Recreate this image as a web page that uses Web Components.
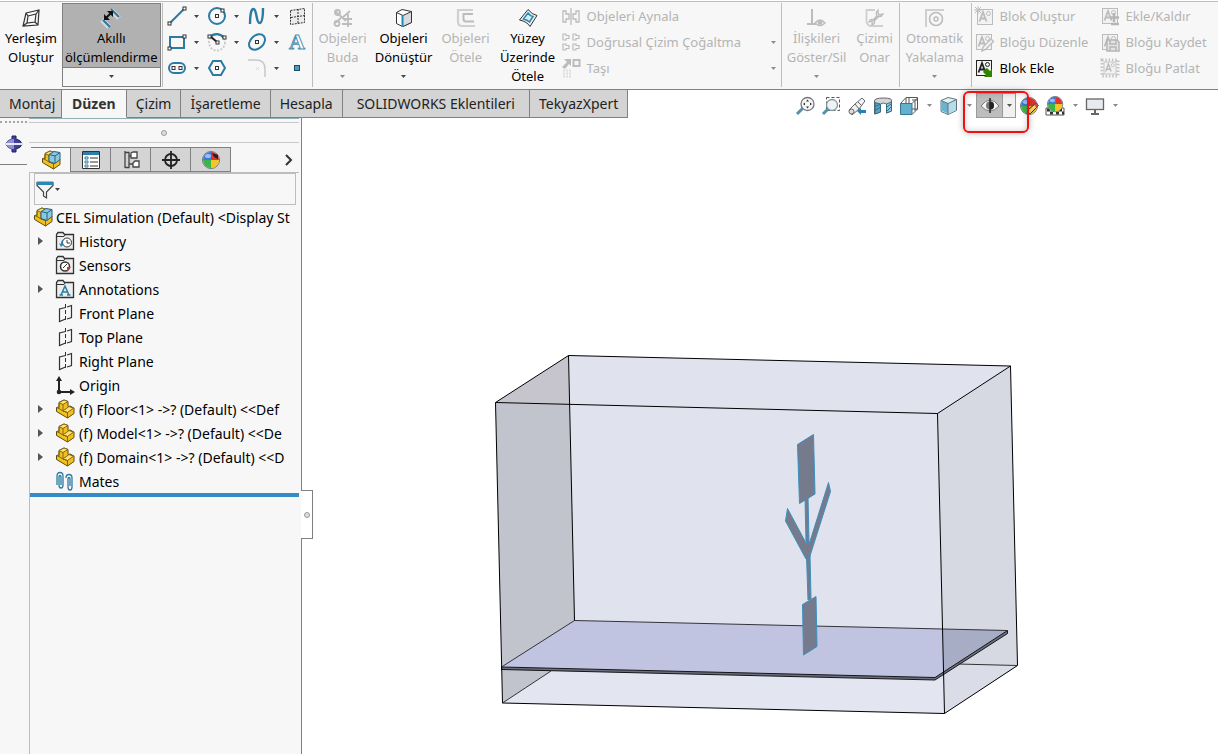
<!DOCTYPE html>
<html lang="tr">
<head>
<meta charset="utf-8">
<title>CEL Simulation</title>
<style>
  html, body { height: 100%; margin: 0; }
  body {
    --panel: #f7f7f7;
    --tab: #d4d4d4;
    --line: #808080;
    --line-soft: #bdbdbd;
    --off: #b4b4b4;
    font: 13px/19px "Noto Sans", "Open Sans", sans-serif;
    color: #111;
    background: #fff;
    overflow: hidden;
  }
  .w46 { width: 46px; }
  .w60 { width: 60px; }
  .w62 { width: 62px; }
  .w70 { width: 70px; }
</style>
</head>
<body>
<cad-app>
  <cad-ribbon slot="ribbon">
    <ribbon-group>
      <ribbon-button class="w62" icon="layout">Yerleşim<br>Oluştur</ribbon-button>
      <ribbon-button icon="dimension" arrow active>Akıllı<br>ölçümlendirme</ribbon-button>
    </ribbon-group>
    <ribbon-group>
      <sketch-tools></sketch-tools>
    </ribbon-group>
    <ribbon-group>
      <ribbon-button class="w60" icon="trim" arrow disabled>Objeleri<br>Buda</ribbon-button>
      <ribbon-button class="w62" icon="convert" arrow>Objeleri<br>Dönüştür</ribbon-button>
      <ribbon-button class="w62" icon="offset" disabled>Objeleri<br>Ötele</ribbon-button>
      <ribbon-button class="w62" icon="surface">Yüzey<br>Üzerinde<br>Ötele</ribbon-button>
      <ribbon-list wide>
        <ribbon-item icon="mirror" disabled>Objeleri Aynala</ribbon-item>
        <ribbon-item icon="pattern" arrow disabled>Doğrusal Çizim Çoğaltma</ribbon-item>
        <ribbon-item icon="move" arrow disabled>Taşı</ribbon-item>
      </ribbon-list>
    </ribbon-group>
    <ribbon-group>
      <ribbon-button class="w70" icon="relations" arrow disabled>İlişkileri<br>Göster/Sil</ribbon-button>
      <ribbon-button class="w46" icon="repair" disabled>Çizimi<br>Onar</ribbon-button>
    </ribbon-group>
    <ribbon-group>
      <ribbon-button class="w70" icon="snap" arrow disabled>Otomatik<br>Yakalama</ribbon-button>
    </ribbon-group>
    <ribbon-group last>
      <ribbon-list>
        <ribbon-item icon="block-new" disabled>Blok Oluştur</ribbon-item>
        <ribbon-item icon="block-edit" disabled>Bloğu Düzenle</ribbon-item>
        <ribbon-item icon="block-insert">Blok Ekle</ribbon-item>
      </ribbon-list>
      <ribbon-list>
        <ribbon-item icon="block-add" disabled>Ekle/Kaldır</ribbon-item>
        <ribbon-item icon="block-save" disabled>Bloğu Kaydet</ribbon-item>
        <ribbon-item icon="block-explode" disabled>Bloğu Patlat</ribbon-item>
      </ribbon-list>
    </ribbon-group>
  </cad-ribbon>

  <command-tabs slot="tabs">
    <command-tab class="w62">Montaj</command-tab>
    <command-tab active>Düzen</command-tab>
    <command-tab>Çizim</command-tab>
    <command-tab>İşaretleme</command-tab>
    <command-tab>Hesapla</command-tab>
    <command-tab wide>SOLIDWORKS Eklentileri</command-tab>
    <command-tab>TekyazXpert</command-tab>
  </command-tabs>

  <view-toolbar slot="view">
    <view-tool icon="zoom-fit" label="Sığdır"></view-tool>
    <view-tool icon="zoom-area" label="Alana yakınlaş"></view-tool>
    <view-tool icon="previous" label="Önceki görünüm"></view-tool>
    <view-tool icon="section" label="Kesit görünümü"></view-tool>
    <view-tool icon="orientation" label="Görünüm yönü" arrow></view-tool>
    <view-tool icon="shaded" label="Görüntü stili" arrow></view-tool>
    <view-tool icon="eye" label="Gizle/Göster" arrow marked></view-tool>
    <view-tool icon="appearance" label="Görünümü düzenle"></view-tool>
    <view-tool icon="scene" label="Sahne uygula" arrow></view-tool>
    <view-tool icon="monitor" label="Görünüm ayarı" arrow></view-tool>
  </view-toolbar>

  <side-rail slot="rail"></side-rail>

  <feature-panel slot="panel">
    <tree-item root icon="assembly">CEL Simulation (Default) &lt;Display St</tree-item>
    <tree-item icon="history" branch>History</tree-item>
    <tree-item icon="sensors">Sensors</tree-item>
    <tree-item icon="annotations" branch>Annotations</tree-item>
    <tree-item icon="plane">Front Plane</tree-item>
    <tree-item icon="plane">Top Plane</tree-item>
    <tree-item icon="plane">Right Plane</tree-item>
    <tree-item icon="origin">Origin</tree-item>
    <tree-item icon="part" branch>(f) Floor&lt;1&gt; -&gt;? (Default) &lt;&lt;Def</tree-item>
    <tree-item icon="part" branch>(f) Model&lt;1&gt; -&gt;? (Default) &lt;&lt;De</tree-item>
    <tree-item icon="part" branch>(f) Domain&lt;1&gt; -&gt;? (Default) &lt;&lt;D</tree-item>
    <tree-item icon="mates">Mates</tree-item>
  </feature-panel>

  <model-view slot="model"></model-view>
</cad-app>

<script>
const BLUE = '#2a7aa3'
const DARK = '#333'
const OFF = '#bcbcbc'

// Little hollow handle that sketch icons carry on their points.
const knob = (x, y) => `<rect x="${x - 1.5}" y="${y - 1.5}" width="3" height="3" fill="#fff" stroke="${DARK}"/>`

const block = (color, fill) => `
  <rect x="2.5" y="2.5" width="15" height="15" fill="${fill}" stroke="${color}"/>
  <path d="M4.500 14.500 8 5l3.500 9.500M5.800 11.500h4.500" fill="none" stroke="${color}" stroke-width="1.800"/>
  <circle cx="13.500" cy="6.500" r="2" fill="none" stroke="${color}"/>`

const folder = `<path d="M1.500 18.500v-15l1.500-2h5l1.500 2h9v15z" fill="#ededed" stroke="${DARK}" stroke-width="1.300"/><path d="M2 5.500h7l1-1.500" fill="none" stroke="${DARK}"/>`

const brick = `
  <path d="M4 3.500 9 1l4 1.500v5l2-.5 4 2v5.500L12.500 19 1.500 12.500V8.500l2.500-.5z" fill="#f4c01a" stroke="#5f4c12" stroke-linejoin="round"/>
  <path d="M4 3.500 9 1l4 1.500-5 3zM8 12l6-4.500 4.500 1.700-6 4.300z" fill="#ffe375" stroke="#80661a"/>
  <path d="M8 5.500V12l4.500 1.500V19M1.500 8.500 4 9.500V4M4 9.500l4 2.500" fill="none" stroke="#80661a"/>`

const ball = `
  <circle cx="9" cy="9" r="8.500" fill="#e8e8e8" stroke="#69737c"/>
  <path d="M9 9V.8A8.200 8.200 0 0 0 1 9z" fill="#3f78dc"/>
  <path d="M9 9V.8A8.200 8.200 0 0 1 17 9z" fill="#e13331"/>
  <path d="M9 9h8a8.200 8.200 0 0 1-8 8.200z" fill="#f2c627"/>
  <path d="M9 9H1a8.200 8.200 0 0 0 8 8.200z" fill="#3bb54a"/>
  <ellipse cx="6" cy="5" rx="3" ry="2" fill="#fff" opacity=".5"/>`

// All glyphs share a 20 x 20 box.
const ICONS = {
  layout: `<path d="m5 5 13-3-1 15-15 1zM7 8l8-2-1 8-8 1zM5 5l2 3M18 2l-3 4M17 17l-3-3M2 18l4-3" fill="none" stroke="${DARK}" stroke-width="1.200"/>`,
  dimension: `
    <path d="m1 12 7 7M10 2l8 8" fill="none" stroke="#fff" stroke-width="5" opacity=".5"/>
    <path d="m2 12 7 7M10 1l8 8" fill="none" stroke="${BLUE}" stroke-width="2"/>
    <path d="m5 10 5-5" stroke="#111" stroke-width="2"/>
    <path d="M3 12V6l6 6zM12 3v6L6 3z" fill="#111"/>`,
  line: `<path d="M3 17 17 3" stroke="${BLUE}" stroke-width="2"/>${knob(2.5, 17.5)}${knob(17.5, 2.5)}`,
  circle: `<circle cx="10" cy="10" r="8" fill="none" stroke="${BLUE}" stroke-width="2"/>${knob(10, 10)}${knob(15.5, 4.5)}`,
  spline: `<path d="M3 18C3 9 4 3 6.500 3 10 3 9 17 12.500 17 15.500 17 16 8 16 2" fill="none" stroke="${BLUE}" stroke-width="2.400"/>`,
  grid: `<path d="M3.500 4.500 17.500 2.500v14l-14 2zM11 3v15M4 11.500l14-2" fill="#ececec" stroke="${DARK}" stroke-dasharray="2 1"/>`,
  rect: `<rect x="3" y="5" width="14" height="11" fill="none" stroke="${BLUE}" stroke-width="2"/>${knob(2.5, 16.5)}${knob(17.5, 4.5)}`,
  arc: `<circle cx="10" cy="10.500" r="8" fill="none" stroke="#c9c9c9" stroke-width="1.800" stroke-dasharray="2 1.500"/><path d="M3 5a9 9 0 0 1 14 1" fill="none" stroke="${BLUE}" stroke-width="2.200"/><path d="m4 5 6 5" stroke="#222" stroke-width="2"/>${knob(2.5, 4.5)}${knob(10.5, 10.5)}${knob(17.5, 5.5)}`,
  ellipse: `<ellipse cx="10" cy="10" rx="9" ry="6.500" transform="rotate(-42 10 10)" fill="none" stroke="${BLUE}" stroke-width="2"/>${knob(10, 10)}`,
  text: `<text x="10" y="17" text-anchor="middle" font-family="Liberation Serif, serif" font-weight="700" font-size="22" fill="#fff" stroke="#4b90b2">A</text>`,
  slot: `<rect x="2" y="5" width="16" height="10" rx="5" fill="none" stroke="${BLUE}" stroke-width="2"/>${knob(6.5, 10)}${knob(13.5, 10)}`,
  hexagon: `<path d="M6 3h8l4 7-4 7H6l-4-7z" fill="none" stroke="${BLUE}" stroke-width="2"/>${knob(10, 10)}`,
  fillet: `<path d="M1 2h8q9 0 9 9v8" fill="none" stroke="#c8c8c8" stroke-width="1.500"/><path d="m9 9 3 3m0-3-3 3" stroke="#ddd"/>`,
  point: `<rect x="7.500" y="7.500" width="5" height="5" fill="#4a9ec4" stroke="#1c4c63"/>`,
  trim: `<g fill="none" stroke="${OFF}" stroke-width="1.800"><path d="m2 3 11 10M9 10l8-7M2 15l6-5M11 11h8M15 6v13M9 16h10"/><circle cx="4" cy="15.500" r="2.500"/><circle cx="4.500" cy="4.500" r="2.500"/></g>`,
  convert: `<path d="M2.500 4.500 8 1.500l9.500 2v11L8.500 18.500l-6-3z" fill="#fff" stroke="${DARK}"/><path d="M9 7.500 17.500 4v10.500L9 18.500z" fill="#d9dcdf"/><path d="M2.500 4.500 9 7.500 17.500 3.500M17.500 4v10.500L9 18.500" fill="none" stroke="${DARK}"/><path d="M8.500 7v12" stroke="#2488b8" stroke-width="2"/>`,
  offset: `<path d="M17 2H2v12q0 4 4 4h13" fill="none" stroke="#d0d0d0" stroke-width="2.200"/><path d="M17 6H7.500v5q0 2.500 2.500 2.500h8" fill="none" stroke="${OFF}" stroke-width="2"/>`,
  surface: `<path d="M1.500 12 10 1.500q4 5 9 6L12 18.500q-3-5-10.500-6.500z" fill="#eee" stroke="${DARK}"/><path d="M5.500 11 10 5q2 3 5 3.500L11.500 14q-2-2-6-3z" fill="#d9edf5" stroke="#2488b8" stroke-width="1.500"/>`,
  mirror: `<path d="M10 2v17M2 5h3v3h3v5H5v3H2zM18 5h-3v3h-3v5h3v3h3z" fill="none" stroke="${OFF}" stroke-width="1.300"/>`,
  pattern: `<path d="M2 2h3v1.500h3v3H5V8H2zM12 2h3v1.500h3v3h-3V8h-3zM2 12h3v1.500h3v3H5V18H2zM12 12h3v1.500h3v3h-3V18h-3z" fill="none" stroke="${OFF}" stroke-width="1.200"/>`,
  move: `<path d="M1 9 6 4 3 1h7v7L8 6l-4 5z" fill="${OFF}"/><rect x="12.500" y="2" width="6" height="6" fill="none" stroke="${OFF}" stroke-width="2"/><path d="M2 12.500h8M2 15.500h8M2 18.500h8" stroke="#dedede" stroke-width="2" stroke-dasharray="2 1"/>`,
  relations: `<path d="M5 1v14M0 16h9" stroke="${OFF}" stroke-width="2" fill="none"/><path d="M8 15q5-6 10 0-5 5-10 0z" fill="#eee" stroke="${OFF}" stroke-width="1.300"/><circle cx="13" cy="14.500" r="2.300" fill="${OFF}"/>`,
  repair: `<path d="M10 2H1.500v12q1 4 5 4H18" fill="none" stroke="#cfcfcf" stroke-width="1.800"/><path d="M7 14 14 7" stroke="${OFF}" stroke-width="3"/><path d="M13 2q-3 3-1 6 4 2 6-2l-4 1-1-3zM7 17q4-2 2-5-4-2-5 2l3-1z" fill="#e4e4e4" stroke="${OFF}" stroke-width="1.300"/>`,
  snap: `<path d="M1 19V2h18" fill="none" stroke="#cfcfcf" stroke-width="2"/><circle cx="11" cy="11" r="6.500" fill="none" stroke="${OFF}" stroke-width="1.600"/><circle cx="11" cy="11" r="2" fill="none" stroke="${OFF}" stroke-width="1.500"/>`,
  'block-new': `<g transform="translate(1 1)">${block(OFF, '#f2f2f2')}</g><path d="M4 0v8M0 4h8M1 1l6 6M7 1 1 7" stroke="${OFF}"/>`,
  'block-edit': `${block(OFF, '#f2f2f2')}<path d="m8 19 1-4 8-8 2.500 2.500-8 8z" fill="#f2f2f2" stroke="${OFF}" stroke-width="1.400"/>`,
  'block-insert': `${block('#222', '#f2f2f2')}<path d="m11 11 2-1 3 3 2-2v8h-8l2-2-3-3z" fill="#2f8500"/>`,
  'block-add': `${block(OFF, '#f2f2f2')}<path d="M14 7v9M10 11.500h9M11 18h8" stroke="#b5b5b5" stroke-width="2.500"/>`,
  'block-save': `${block(OFF, '#f2f2f2')}<path d="M7 8h10l2 2v9H7z" fill="#e4e4e4" stroke="#b5b5b5" stroke-width="1.500"/><path d="M10 8v4h6V8M10 19v-4h6v4" fill="none" stroke="#b5b5b5" stroke-width="1.500"/>`,
  'block-explode': `<rect x="2" y="2" width="16" height="16" fill="none" stroke="#c4c4c4" stroke-width="3" stroke-dasharray="1.500 1.800"/><g transform="translate(2 2) scale(.8)">${block(OFF, '#f2f2f2')}</g>`,
  'zoom-fit': `<path d="m2 18 6-6" stroke="#4e92b1" stroke-width="3"/><circle cx="12.500" cy="8" r="6.500" fill="#f4f8fa" stroke="#777" stroke-width="1.300"/><path d="m12.500 3.500 1.500 2h-3zM12.500 12.500l1.500-2h-3zM8 8l2-1.500v3zM17 8l-2-1.500v3z" fill="#333"/>`,
  'zoom-area': `<path d="M5.500 1.500h13v13h-13z" fill="none" stroke="#555" stroke-dasharray="3 2"/><path d="m2 18 6-6" stroke="#4e92b1" stroke-width="3"/><circle cx="11" cy="9" r="5.500" fill="#eaf4f8" stroke="#8b969c" stroke-width="1.300"/>`,
  previous: `<path d="m2 14 3 5 7-6 6-8-3-3-7 6z" fill="#f1f1f1" stroke="#666"/><path d="m8 8 4 5M11 6l4 4" stroke="#666"/><circle cx="4.500" cy="15.500" r="2.500" fill="#ddd" stroke="#666"/><path d="m10 15 4-3v2h5v3h-5v2z" fill="#2682b2"/>`,
  section: `<path d="M1.500 5q0-3 9-3t8 3v10l-5 2V8q-3-2-6 0v8l-6 2z" fill="#d5d5d5" stroke="#666"/><path d="M2 6.500 7.500 8v8L2 18z" fill="#55a5c9" stroke="#356b83"/><path d="m13.500 8 5-2v9l-5 2z" fill="#8cc7e0" stroke="#356b83"/><path d="m2 10.500 5-2M2 14.500l5-3M14 11l4-3M14 15l4-4" stroke="#356b83"/>`,
  orientation: `<path d="M1.500 7.500 7 1.500h11.500V13L13 18.500z" fill="#fff" stroke="#555"/><path d="M13 7.500 18.500 2M7 2v5M7 13h12M10 2v5M13 4h5M16 5v10" fill="none" stroke="#555"/><path d="M1.500 7.500H13v11H1.500z" fill="#65b0cf" stroke="#377791"/>`,
  shaded: `<path d="M2 4.500 9 1.500l8.500 2v11L9 18.500l-7-3z" fill="#e4f3f8" stroke="#5b7580"/><path d="m2.500 5 6.500 2.500v10l-6.500-3z" fill="#6bb2ce"/><path d="M9 7.500 17 4v10l-8 4z" fill="#b4dcea"/><path d="m2 4.500 7 3 8.500-4M9 7.500v11" fill="none" stroke="#5b7580"/>`,
  eye: `<path d="M1 10q9-12 18 0-9 10-18 0z" fill="#f4f4f4" stroke="#777"/><circle cx="10" cy="9.500" r="4" fill="#777"/><path d="M10 2v15" stroke="#111" stroke-width="1.300"/><path d="M10 5.500a4 4 0 0 1 0 8z" fill="#222"/>`,
  appearance: `<g transform="translate(1 1)">${ball}</g><path d="m8 18 1-4 8-7 2.500 2.500-8 8z" fill="#ffd66b" stroke="#3c3118"/><path d="m15 9 2-2 2.500 2.500-2 2z" fill="#cf5148"/>`,
  scene: `<path d="M1 12h18v7H1z" fill="#fff" stroke="#555"/><path d="M2 14h16M5 17h14" stroke="#333" stroke-width="3" stroke-dasharray="3 3"/><g transform="translate(2 0) scale(.9)">${ball}</g>`,
  monitor: `<rect x="1.500" y="3" width="17" height="10.500" fill="#e7ebed" stroke="#666" stroke-width="1.300"/><path d="M10 14v4M6 18h8" stroke="#666" stroke-width="2"/>`,
  assembly: `${brick}<path d="m8 4.500 5-3 6 1v7l-5 4-6-2z" fill="#8ec7e2" stroke="#24617e"/><path d="m8 4.500 6 1.500v7M14 6l5-3.500" fill="none" stroke="#24617e"/>`,
  part: brick,
  property: `<path d="M1.500 1.500h17v17h-17z" fill="#fff" stroke="${DARK}"/><path d="M2 2h16v3H2z" fill="#2b7fa8"/><path d="M9 8h8M9 12h8M9 16h8" stroke="${DARK}"/><path d="M4 7h3v2H4zM4 11h3v2H4zM4 15h3v2H4z" fill="#fff" stroke="${BLUE}"/>`,
  config: `<path d="M4 1v17M4 2.500h4v15H4M8 6h3M8 14h4" fill="none" stroke="#444" stroke-width="1.300"/><path d="m10 3 2-1h4v6h-6zM12 13l2-2h4v6h-6z" fill="#fff" stroke="#444" stroke-width="1.300"/>`,
  target: `<circle cx="10" cy="10" r="6" fill="none" stroke="#222" stroke-width="1.800"/><path d="M10 1v18M1 10h18" stroke="#222" stroke-width="1.800"/>`,
  display: `<g transform="translate(1 1)">${ball}</g><path d="m11 3 6 2v4l-4-2z" fill="#222"/>`,
  history: `${folder}<circle cx="12" cy="11.500" r="4.500" fill="#fff" stroke="${DARK}"/><path d="M12 9v3h3" fill="none" stroke="${DARK}"/><path d="M9 8a5 5 0 0 0-3 5l-2-1 2 4 3-3H7q0-3 2-5z" fill="#2687b8"/>`,
  sensors: `${folder}<circle cx="10" cy="11.500" r="4.500" fill="#fff" stroke="${DARK}" stroke-width="1.500"/><path d="m8 13 4-4" stroke="${DARK}"/><path d="M12 12h4l-4 5z" fill="#e0331e"/>`,
  annotations: `${folder}<path d="m6 16 4-9 4 9M7.500 13h5M4.500 16h3.500M12 16h3.500" fill="none" stroke="#277da5" stroke-width="1.500"/>`,
  plane: `<path d="M10.500 4.500 4.500 6v12.500l6-2.500M12 4l4.500-1.500v12L12 16" fill="none" stroke="${DARK}" stroke-width="1.200"/><path d="M10.500 1v18" stroke="${DARK}" stroke-dasharray="4 2"/>`,
  origin: `<path d="M4 4v13h13" fill="none" stroke="#222" stroke-width="2"/><path d="M4 1 7 6H1zM20 17l-5-3v6z" fill="#222"/><circle cx="4" cy="17" r="2.300" fill="#222"/>`,
  mates: `<g fill="none" stroke="${BLUE}" stroke-width="1.300"><path d="M2 14V5q0-3.500 3-3.500T8 5v9q0 3-2 3t-2-3V6q0-1.500 1-1.500T6 6v8"/><path d="M11 7q0-3.500 3-3.500T17 7v9q0 3-2 3t-2-3V8q0-1.500 1-1.500T15 8v7"/></g>`,
  filter: `<path d="M2 3.500h16v3L11.500 13v6l-3-2v-4L2 6.500z" fill="#f4f4f4" stroke="#444" stroke-width="1.200"/><path d="M2 2.500h16V6H2z" fill="#2b88b3"/>`,
  chevron: `<path d="m7 5 5 5-5 5" fill="none" stroke="#333" stroke-width="2"/>`,
  spindle: `<path d="M8 2h4v3q5 1 6 5-1 4-6 5v3H8v-3q-5-1-6-5 1-4 6-5z" fill="#3f3f9d" stroke="#222259"/><path d="M8 5h2v10H8q-5-1-6-5 1-4 6-5z" fill="#8f90d6"/><path d="M2 10h16" stroke="#e8e8ff" stroke-width="2"/>`,
}

const drawIcon = name => `<svg class="icon" width="20" height="20" viewBox="0 0 20 20" aria-hidden="true">${ICONS[name] || ''}</svg>`
const drawArrow = () => `<svg class="arrow" width="5" height="3" viewBox="0 0 5 3" aria-hidden="true"><path d="M0 0h5L2.500 3z" fill="currentColor"/></svg>`

const RESET = `
  button { appearance: none; margin: 0; padding: 0; border: 0; background: none; font: inherit; color: inherit; }
  svg { display: block; flex: none; }
  .icon { overflow: visible; }
`

// Every element renders once from its attributes.
class CadElement extends HTMLElement {
  constructor() {
    super()
    this.attachShadow({ mode: 'open' })
  }

  connectedCallback() {
    this.shadowRoot.innerHTML = `<style>${RESET}${this.css()}</style>${this.html()}`
  }

  css() { return '' }
  html() { return '<slot></slot>' }
}

customElements.define('cad-app', class extends CadElement {
  css() {
    return `
      :host { display: flex; flex-direction: column; height: 100vh; }
      .bar { display: flex; justify-content: space-between; height: 28px; flex: none; }
      main { display: flex; flex: 1; min-height: 0; }
      ::slotted(model-view) { flex: 1; min-width: 0; }
    `
  }

  html() {
    return `
      <slot name="ribbon"></slot>
      <div class="bar"><slot name="tabs"></slot><slot name="view"></slot></div>
      <main><slot name="rail"></slot><slot name="panel"></slot><slot name="model"></slot></main>
    `
  }
})

customElements.define('cad-ribbon', class extends CadElement {
  css() {
    return `
      :host {
        display: flex;
        flex: none;
        height: 87px;
        margin-top: 1px;
        border-top: 1px solid var(--line-soft);
        border-bottom: 1px solid var(--line);
        background: var(--panel);
      }
    `
  }
})

customElements.define('ribbon-group', class extends CadElement {
  css() {
    return `
      :host {
        display: flex;
        margin-block: 1px 2px;
        padding-right: 1px;
        border-right: 1px solid var(--line-soft);
      }
      :host([last]) { border: 0; }
    `
  }
})

customElements.define('ribbon-button', class extends CadElement {
  css() {
    return `
      :host { display: flex; }
      button {
        display: flex;
        flex-direction: column;
        align-items: center;
        width: 100%;
        color: #000;
      }
      .face {
        display: flex;
        flex-direction: column;
        align-items: center;
        gap: 1px;
        width: 100%;
        box-sizing: border-box;
        padding-top: 5px;
        white-space: nowrap;
      }
      .arrow { margin-top: 8px; color: #444; }
      :host([disabled]) button { color: var(--off); }
      :host([disabled]) .arrow { color: #8c8c8c; }
      :host([active]) button { border: 1px solid var(--line); background: var(--panel); }
      :host([active]) .face { padding: 4px 2px 0; border-bottom: 1px solid var(--line); background: #b1b1b1; }
      :host([active]) .arrow { margin-top: 7px; }
    `
  }

  html() {
    return `
      <button type="button" ${this.hasAttribute('disabled') ? 'disabled' : ''}>
        <span class="face">${drawIcon(this.getAttribute('icon'))}<span><slot></slot></span></span>
        ${this.hasAttribute('arrow') ? drawArrow() : ''}
      </button>
    `
  }
})

customElements.define('ribbon-list', class extends CadElement {
  css() {
    return `
      :host { display: flex; flex-direction: column; min-width: 126px; }
      :host([wide]) { min-width: 221px; }
    `
  }
})

customElements.define('ribbon-item', class extends CadElement {
  css() {
    return `
      :host { display: flex; }
      button {
        display: flex;
        align-items: center;
        gap: 6px;
        width: 100%;
        height: 26px;
        padding: 0 4px 0 2px;
        color: #000;
        white-space: nowrap;
      }
      .arrow { margin-left: auto; color: #8c8c8c; }
      :host([disabled]) button { color: var(--off); }
    `
  }

  html() {
    return `
      <button type="button" ${this.hasAttribute('disabled') ? 'disabled' : ''}>
        ${drawIcon(this.getAttribute('icon'))}<span><slot></slot></span>
        ${this.hasAttribute('arrow') ? drawArrow() : ''}
      </button>
    `
  }
})

// name, tooltip, drop-down
const SKETCH_TOOLS = [
  ['line', 'Çizgi', true], ['circle', 'Daire', true], ['spline', 'Eğri', true], ['grid', 'Düzlem', false],
  ['rect', 'Dikdörtgen', true], ['arc', 'Yay', true], ['ellipse', 'Elips', true], ['text', 'Metin', false],
  ['slot', 'Yuva', true], ['hexagon', 'Çokgen', false], ['fillet', 'Radyus', true], ['point', 'Nokta', false],
]

customElements.define('sketch-tools', class extends CadElement {
  css() {
    return `
      :host {
        display: grid;
        grid-template-columns: repeat(3, 40px) 20px;
        grid-auto-rows: 26px;
        padding-inline: 4px;
      }
      button { display: flex; align-items: center; gap: 7px; color: #444; }
    `
  }

  html() {
    return SKETCH_TOOLS.map(([name, label, arrow]) => `
      <button type="button" aria-label="${label}">${drawIcon(name)}${arrow ? drawArrow() : ''}</button>
    `).join('')
  }
})

customElements.define('command-tabs', class extends CadElement {
  css() {
    return ':host { display: flex; font-size: 14px; }'
  }
})

customElements.define('command-tab', class extends CadElement {
  css() {
    return `
      :host { display: flex; }
      button {
        width: 100%;
        padding: 0 9px;
        border-right: 1px solid var(--line);
        border-bottom: 1px solid var(--line);
        background: var(--tab);
        color: #222;
        white-space: nowrap;
      }
      :host([wide]) button { padding: 0 14px; }
      :host([active]) button { padding: 0 10px; border-bottom-color: var(--panel); background: var(--panel); font-weight: 700; color: #333; }
    `
  }

  html() {
    return '<button type="button"><slot></slot></button>'
  }
})

customElements.define('view-toolbar', class extends CadElement {
  css() {
    return ':host { display: flex; align-items: flex-start; margin-right: 96px; padding-top: 3px; }'
  }
})

customElements.define('view-tool', class extends CadElement {
  css() {
    return `
      :host { display: flex; position: relative; height: 25px; }
      button { display: grid; place-items: center; width: 26px; color: #8a8a8a; }
      button.more { width: 14px; }
      :host([marked]) button { border: 1px solid #9a9a9a; background: #bdbdbd; width: 27px; }
      :host([marked]) button.more { border-left: 0; background: #f1f1f1; width: 13px; color: #555; }
      /* call-out ring around the highlighted control */
      .mark {
        position: absolute;
        inset: -2px -13px -15px -13px;
        border: 2px solid #f01010;
        border-radius: 6px;
        box-shadow: 0 0 6px rgb(0 0 0 / .3), inset 0 0 6px rgb(0 0 0 / .2);
        pointer-events: none;
        z-index: 1;
      }
    `
  }

  html() {
    const label = this.getAttribute('label')
    return `
      <button type="button" aria-label="${label}">${drawIcon(this.getAttribute('icon'))}</button>
      ${this.hasAttribute('arrow') ? `<button type="button" class="more" aria-label="${label} seçenekleri">${drawArrow()}</button>` : ''}
      ${this.hasAttribute('marked') ? '<span class="mark"></span>' : ''}
    `
  }
})

customElements.define('side-rail', class extends CadElement {
  css() {
    return `
      :host { display: block; flex: none; width: 29px; background: var(--panel); }
      .tools { width: 27px; padding-top: 3px; border-bottom: 1px solid var(--line); }
      .grip { border-top: 2px dotted #a5a5a5; }
      button { display: grid; place-items: center; width: 27px; height: 41px; }
    `
  }

  html() {
    return `<div class="tools"><div class="grip"></div><button type="button" aria-label="Döndür">${drawIcon('spindle')}</button></div>`
  }
})

const PANEL_TABS = [
  ['assembly', 'Unsur ağacı'], ['property', 'Özellikler'], ['config', 'Konfigürasyonlar'],
  ['target', 'Ölçümlendirme'], ['display', 'Görüntü'],
]

customElements.define('feature-panel', class extends CadElement {
  css() {
    return `
      :host {
        display: block;
        position: relative;
        flex: none;
        width: 272px;
        border-right: 1px solid var(--line);
        background: var(--panel);
      }
      .grip {
        display: grid;
        place-items: center;
        height: 18px;
        margin: 4px 2px 4px 0;
        padding-top: 1px;
        border-block: 1px solid #c9c9c9;
        box-shadow: 0 -3px 0 var(--panel), 0 -4px 0 #8fb0b4;
      }
      .dot { width: 4px; height: 4px; border: 1px solid #9a9a9a; border-radius: 50%; background: #ddd; }
      .tabs { display: flex; height: 25px; margin-right: 2px; padding-left: 2px; border-bottom: 1px solid var(--line-soft); }
      .tabs button {
        display: grid;
        place-items: center;
        width: 40px;
        box-sizing: border-box;
        border: 1px solid var(--line);
        border-left: 0;
        background: var(--tab);
      }
      .tabs button.on { border-bottom: 0; background: none; }
      .tabs button.next { width: 20px; margin-left: auto; border: 0; background: none; }
      .body { border-left: 1px solid var(--line-soft); height: calc(100% - 54px); }
      label {
        display: flex;
        align-items: center;
        height: 30px;
        margin: 0 5px 0 4px;
        border: 1px solid var(--line-soft);
        color: #444;
      }
      input { flex: 1; min-width: 0; height: 24px; border: 0; outline: 0; background: none; font: inherit; }
      .bar { height: 4px; margin-right: 2px; background: #338cc4; }
      .handle {
        position: absolute;
        top: 372px;
        left: 100%;
        display: grid;
        place-items: center;
        width: 11px;
        height: 47px;
        border: 1px solid var(--line);
        border-left: 0;
        background: #fff;
      }
    `
  }

  html() {
    return `
      <div class="grip"><span class="dot"></span></div>
      <div class="tabs">
        ${PANEL_TABS.map(([name, label], i) => `<button type="button" class="${i ? '' : 'on'}" aria-label="${label}">${drawIcon(name)}</button>`).join('')}
        <button type="button" class="next" aria-label="Diğer">${drawIcon('chevron')}</button>
      </div>
      <div class="body">
        <label>${drawIcon('filter')}${drawArrow()}<input type="text" aria-label="Filtre"></label>
        <slot></slot>
        <div class="bar"></div>
      </div>
      <span class="handle"><span class="dot"></span></span>
    `
  }
})

customElements.define('tree-item', class extends CadElement {
  css() {
    return `
      :host {
        display: flex;
        align-items: center;
        height: 24px;
        margin-right: 2px;
        overflow: hidden;
        font-size: 14px;
        color: #000;
        white-space: nowrap;
      }
      .toggle { display: grid; place-items: center; flex: none; width: 21px; height: 20px; margin-right: 4px; }
      .icon { margin-right: 4px; }
      :host([root]) .toggle { display: none; }
      :host([root]) .icon { margin: 0 3px; }
    `
  }

  html() {
    const mark = '<svg width="5" height="8" viewBox="0 0 5 8"><path d="M0 0v8l5-4z" fill="#555"/></svg>'
    return `
      ${this.hasAttribute('branch') ? `<button type="button" class="toggle" aria-label="Genişlet">${mark}</button>` : '<span class="toggle"></span>'}
      ${drawIcon(this.getAttribute('icon'))}<slot></slot>
    `
  }
})

customElements.define('model-view', class extends CadElement {
  css() {
    return `
      :host { display: block; background: #fff; }
      svg { width: 100%; height: 100%; }
    `
  }

  html() {
    return `
      <svg viewBox="302 118 916 636" preserveAspectRatio="xMinYMin" role="img" aria-label="Model">
        <!-- faces of the fluid domain -->
        <path d="M568.500 355.500 1010.500 366 937.500 413.500 944.500 713.500 502.500 703 495.500 402.500z" fill="#e0e2ed"/>
        <path d="M568.500 355.500 495.500 402.500 569.500 404.500z" fill="#c6c5cd"/>
        <path d="M495.500 402.500 569.500 404.500 574.500 620.500 551 671 502.500 703z" fill="#c1c4cc"/>
        <path d="M1010.500 366 937.500 413.500 944.500 713.500 1017.500 665.500z" fill="#d6d9e1"/>
        <path d="M502.500 703 551 671 935 679 944 679 944.500 713.500z" fill="#e3e5f1"/>
        <path d="M944 674 958 664 1017.500 665.500 944.500 713.500z" fill="#dadce8"/>
        <!-- floor plate -->
        <path d="M574.500 620.500 1007.500 630.500 935 677.500 501.500 667z" fill="#c0c4e1"/>
        <path d="M942.500 629 1007.500 630.500 943.500 672z" fill="#a8adc6"/>
        <path d="M501.500 667 935 677.500 1007.500 630.500v3L935 680 501.500 669.500z" fill="#6b6e7d" stroke="#15151a"/>
        <path d="m574.500 620.500 433 10M574.500 620.500l-73 46.500" fill="none" stroke="#33343a"/>
        <g fill="none" stroke="#000">
          <path d="m568.500 355.500 442 10.500-73 47.500-442-11z"/>
          <path d="m495.500 402.500 7 300.500 442 10.500-7-300M1010.500 366l7 299.500-73 48M568.500 355.500l6 265"/>
          <path d="m502.500 703 48.500-32M958 664l59.500 1.500" stroke="#333"/>
        </g>
        <!-- wind turbine -->
        <g fill="#757b8c" stroke="#3b90bf">
          <path d="m805 498 3-1.500 1 46-3-1z"/>
          <path d="m806.500 556 3.500-1 1 44-3 1z"/>
          <path d="M787.500 508.500 806 543l2-1 1.500 1 19-60.500 2 9L809 559h-3l-20.500-38z"/>
          <path d="m797.500 444.500 16-10 1.500 59.500-15.500 9.500z"/>
          <path d="m802.500 604.500 13.500-8 1 50-13.500 8.500z"/>
        </g>
      </svg>
    `
  }
})
</script>
</body>
</html>
